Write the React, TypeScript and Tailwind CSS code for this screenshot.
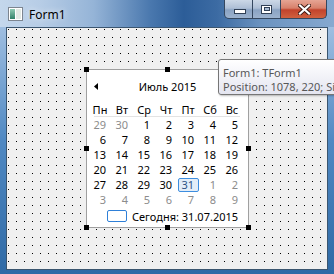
const days = ['Пн', 'Вт', 'Ср', 'Чт', 'Пт', 'Сб', 'Вс']

// 0 = other month, 1 = this month, 2 = selected
const weeks: [string, number][][] = [
  [['29', 0], ['30', 0], ['1', 1], ['2', 1], ['3', 1], ['4', 1], ['5', 1]],
  [['6', 1], ['7', 1], ['8', 1], ['9', 1], ['10', 1], ['11', 1], ['12', 1]],
  [['13', 1], ['14', 1], ['15', 1], ['16', 1], ['17', 1], ['18', 1], ['19', 1]],
  [['20', 1], ['21', 1], ['22', 1], ['23', 1], ['24', 1], ['25', 1], ['26', 1]],
  [['27', 1], ['28', 1], ['29', 1], ['30', 1], ['31', 2], ['1', 0], ['2', 0]],
  [['3', 0], ['4', 0], ['5', 0], ['6', 0], ['7', 0], ['8', 0], ['9', 0]],
]

function Handle({ className }: { className: string }) {
  return <div className={`absolute h-[5px] w-[5px] bg-black ${className}`} />
}

function Calendar() {
  return (
    <div className="relative h-[159px] w-[163px] border border-[#a0a0a0] bg-white">
      <div className="mt-[4px] flex h-[24px] items-center">
        <svg width="4" height="7" className="ml-[7px]">
          <path d="M4 0 L0 3.5 L4 7 Z" fill="#000" />
        </svg>
        <div className="flex-1 text-center text-black">Июль 2015</div>
        <svg width="4" height="7" className="mr-[7px]">
          <path d="M0 0 L4 3.5 L0 7 Z" fill="#000" />
        </svg>
      </div>

      <div className="mt-[4px] grid h-[14px] grid-cols-[repeat(7,22px)] items-center pl-[2px] text-black">
        {days.map((d) => (
          <div key={d} className="text-center">{d}</div>
        ))}
      </div>
      <div className="ml-[7px] mr-[8px] h-px bg-[#e3e3e3]" />

      <div className="pl-[2px]">
        {weeks.map((w, i) => (
          <div key={i} className="grid h-[15px] grid-cols-[repeat(7,22px)]">
            {w.map(([n, k], j) =>
              k === 2 ? (
                <div key={j} className="flex items-center justify-end">
                  <div className="ml-[1px] flex h-[14px] w-[21px] items-center justify-end rounded-[2px] border border-[#3d8ee0] bg-[#e3edf8] pr-[4px] text-[#2e5385]">
                    {n}
                  </div>
                </div>
              ) : (
                <div
                  key={j}
                  className={`flex items-center justify-end pr-[5px] ${k ? 'text-black' : 'text-[#8c8c8c]'}`}
                >
                  {n}
                </div>
              )
            )}
          </div>
        ))}
      </div>

      <div className="flex h-[18px] items-center pl-[20px]">
        <div className="h-[12px] w-[20px] rounded-[2px] border border-[#2f80d8]" />
        <span className="ml-[5px] text-black">Сегодня: 31.07.2015</span>
      </div>

      <Handle className="left-[-3px] top-[-3px]" />
      <Handle className="left-[78px] top-[-3px]" />
      <Handle className="left-[159px] top-[-3px]" />
      <Handle className="left-[-3px] top-[76px]" />
      <Handle className="left-[159px] top-[76px]" />
      <Handle className="left-[-3px] top-[155px]" />
      <Handle className="left-[78px] top-[155px]" />
      <Handle className="left-[159px] top-[155px]" />
    </div>
  )
}

export default function App() {
  return (
    <div className="relative flex h-[274px] w-[334px] flex-col overflow-hidden bg-[linear-gradient(to_bottom,#b9cfe8_0px,#9dbde0_30px,#5089c3_140px,#2f6aa6_274px)] font-['Noto_Sans',sans-serif] text-[11px] leading-none">
      {/* title bar */}
      <div className="flex h-[27px] shrink-0 bg-[linear-gradient(to_right,#c4d7ec_0%,#b7cde6_12%,#95b4d7_28%,#4a78ae_45%,#2c5d98_55%,#3c6ba3_65%,#6b93c0_78%,#86a9d0_100%)]">
        <div className="ml-[8px] mt-[7px] flex h-[14px] w-[15px] border border-[#7d8590] bg-white p-[1px]">
          <div className="w-[5px] bg-[linear-gradient(to_bottom,#8fcab3,#2f8068)]" />
          <div className="ml-[1px] flex-1 bg-[#e2e9e4]" />
        </div>
        <span className="ml-[6px] mt-[8px] text-[12px] leading-[14px] text-black [text-shadow:0_0_6px_#fff]">
          Form1
        </span>

        <div className="ml-auto mr-[7px] flex h-[19px] overflow-hidden rounded-b-[5px] border border-t-0 border-[#34475f] bg-[#34475f]">
          <div className="flex w-[27px] items-center justify-center bg-[linear-gradient(to_bottom,#ccd8e7_0%,#aebfd6_45%,#8aa3c3_55%,#9db3cf_100%)] pl-[3px] pt-[4px]">
            <div className="h-[5px] w-[12px] border border-[#2f3f55] bg-white" />
          </div>
          <div className="ml-px flex w-[27px] items-center justify-center bg-[linear-gradient(to_bottom,#ccd8e7_0%,#aebfd6_45%,#8aa3c3_55%,#9db3cf_100%)]">
            <div className="flex h-[9px] w-[11px] items-center justify-center border border-[#2f3f55] bg-white">
              <div className="h-[4px] w-[6px] border border-[#2f3f55] bg-[#a9bcd4]" />
            </div>
          </div>
          <div className="ml-px flex w-[45px] items-center justify-center bg-[linear-gradient(to_bottom,#e6a594_0%,#d7806b_45%,#c2432c_55%,#d0613f_100%)] pl-[2px]">
            <svg width="13" height="11" viewBox="0 0 13 11">
              <path d="M2 1.5 L11 9.5 M11 1.5 L2 9.5" stroke="#3b1a14" strokeWidth="4" strokeLinecap="square" />
              <path d="M2 1.5 L11 9.5 M11 1.5 L2 9.5" stroke="#fff" strokeWidth="2.2" strokeLinecap="square" />
            </svg>
          </div>
        </div>
      </div>

      <div className="flex">
        <div className="w-[6px]" />
        {/* form client area with designer grid */}
        <div className="h-[243px] w-[322px] border border-[#3b5670] bg-[#f0f0f0] bg-[conic-gradient(at_1px_1px,transparent_75%,#000_0)] bg-size-[8px_8px] bg-position-[1px_1px] pl-[79px] pt-[41px]">
          <Calendar />
        </div>
      </div>

      {/* hint window */}
      <div className="absolute left-[218px] top-[59px] h-[36px] w-[140px] rounded-[3px] border border-[#767676] bg-[linear-gradient(to_bottom,#ffffff,#e4e5f0)] pl-[4px] pt-[6px] leading-[14px] text-[#575757] shadow-[1px_1px_2px_rgba(0,0,0,0.25)]">
        <div>Form1: TForm1</div>
        <div className="whitespace-nowrap">Position: 1078, 220; Size: 334, 274</div>
      </div>
    </div>
  )
}
